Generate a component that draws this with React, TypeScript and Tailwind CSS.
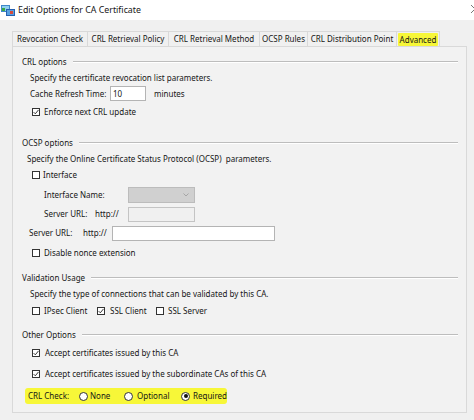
import React from "react";

const font = { fontFamily: '"Noto Sans", "Liberation Sans", sans-serif' };

const CheckBox = ({ checked }: { checked?: boolean }) => (
  <span className="inline-flex w-[8px] h-[8px] shrink-0 border border-[#333] bg-white">
    {checked && (
      <svg width="6" height="6" viewBox="0 0 6 6" className="block">
        <path d="M0.6 3.1 L2.3 4.8 L5.5 0.9" fill="none" stroke="#222" strokeWidth="0.9" />
      </svg>
    )}
  </span>
);

const Radio = ({ checked }: { checked?: boolean }) => (
  <span className="inline-flex items-center justify-center w-[9px] h-[9px] shrink-0 rounded-full border border-[#333] bg-white">
    {checked && <span className="w-[4px] h-[4px] rounded-full bg-[#111]" />}
  </span>
);

const Section = ({ title }: { title: string }) => (
  <div className="flex items-center h-[16px] pl-[9px] pr-[8px]">
    <span>{title}</span>
    <div className="flex-1 ml-[6px] border-t border-[#bdbdbd] border-b border-b-white" />
  </div>
);

const tabs = [
  { label: "Revocation Check", w: "w-[75px]" },
  { label: "CRL Retrieval Policy", w: "w-[81px]" },
  { label: "CRL Retrieval Method", w: "w-[91px]" },
  { label: "OCSP Rules", w: "w-[48px]" },
  { label: "CRL Distribution Point", w: "w-[89px]" },
];

export default function App() {
  return (
    <div className="w-[474px] h-[420px] overflow-hidden bg-[#f0f0f0] text-[#161616]" style={font}>
      {/* title bar */}
      <div className="h-[20px] bg-white flex items-center">
        <svg width="14" height="11" viewBox="0 0 14 11" className="ml-[1px]">
          <rect x="0" y="0" width="9" height="7" fill="#3f86c9" />
          <rect x="1" y="1" width="7" height="5" fill="#8fd0f0" />
          <rect x="1" y="3" width="3" height="3" fill="#3aa845" />
          <rect x="5" y="4" width="9" height="7" fill="#2560b0" />
          <rect x="6" y="5" width="7" height="5" fill="#5aa0e0" />
          <rect x="9" y="6" width="3" height="3" fill="#d84a3a" />
        </svg>
        <span className="ml-[3px] text-[8.8px] leading-none">Edit Options for CA Certificate</span>
        <div className="flex-1" />
        <svg width="10" height="10" viewBox="0 0 10 10" className="mr-[-6px] mt-[-2px]">
          <path d="M1 1 L9 9 M9 1 L1 9" stroke="#555" strokeWidth="0.8" />
        </svg>
      </div>

      <div className="pl-[12px] pr-[7px] pt-[11px]">
        {/* tabs */}
        <div className="flex h-[15px] text-[8px]">
          {tabs.map((t) => (
            <div
              key={t.label}
              className={`${t.w} flex items-center justify-center border-t border-l border-[#d9d9d9] bg-[#f0f0f0] whitespace-nowrap`}
            >
              {t.label}
            </div>
          ))}
          <div className="w-[44px] flex items-center justify-center border-t border-l border-r border-[#d9d9d9] pt-[1px]">
            <span className="bg-[#f7f738] px-[2px] h-[13px] flex items-center rounded-[1px]">Advanced</span>
          </div>
        </div>

        {/* panel */}
        <div className="h-[367px] border border-[#d9d9d9] bg-[#f2f2f2] pt-[7px] text-[8px]">
          <Section title="CRL options" />
          <div className="flex items-center h-[15px] pl-[17px]">
            Specify the certificate revocation list parameters.
          </div>
          <div className="flex items-center h-[17px] pl-[17px]">
            <span className="w-[80px]">Cache Refresh Time:</span>
            <span className="w-[36px] h-[15px] border border-[#b4b4b4] bg-white flex items-center pl-[2px]">10</span>
            <span className="ml-[8px]">minutes</span>
          </div>
          <div className="flex items-center h-[20px] pl-[19px]">
            <CheckBox checked />
            <span className="ml-[4px]">Enforce next CRL update</span>
          </div>
          <div className="h-[13px]" />

          <Section title="OCSP options" />
          <div className="flex items-center h-[15px] pl-[14px]">
            Specify the Online Certificate Status Protocol (OCSP)&nbsp; parameters.
          </div>
          <div className="flex items-center h-[17px] pl-[19px]">
            <CheckBox />
            <span className="ml-[3px]">Interface</span>
          </div>
          <div className="flex items-center h-[23px] pl-[31px]">
            <span className="w-[84px]">Interface Name:</span>
            <span className="w-[67px] h-[16px] border border-[#bcbcbc] bg-[#d0d0d0] flex items-center justify-end pr-[5px]">
              <svg width="6" height="4" viewBox="0 0 6 4">
                <path d="M0.5 0.5 L3 3 L5.5 0.5" fill="none" stroke="#9a9a9a" strokeWidth="0.8" />
              </svg>
            </span>
          </div>
          <div className="flex items-center h-[16px] pl-[31px]">
            <span className="w-[51px]">Server URL:</span>
            <span className="w-[33px]">http://</span>
            <span className="w-[67px] h-[15px] border border-[#c4c4c4] bg-[#f0f0f0]" />
          </div>
          <div className="flex items-center h-[22px] pl-[16px]">
            <span className="w-[54px]">Server URL:</span>
            <span className="w-[29px]">http://</span>
            <span className="w-[163px] h-[15px] border border-[#b4b4b4] bg-white" />
          </div>
          <div className="flex items-center h-[18px] pl-[19px]">
            <CheckBox />
            <span className="ml-[4px]">Disable nonce extension</span>
          </div>
          <div className="h-[8px]" />

          <Section title="Validation Usage" />
          <div className="flex items-center h-[16px] pl-[17px]">
            Specify the type of connections that can be validated by this CA.
          </div>
          <div className="flex items-center h-[18px] pl-[19px]">
            <div className="w-[65px] flex items-center">
              <CheckBox />
              <span className="ml-[4px]">IPsec Client</span>
            </div>
            <div className="w-[59px] flex items-center">
              <CheckBox checked />
              <span className="ml-[5px]">SSL Client</span>
            </div>
            <div className="flex items-center">
              <CheckBox />
              <span className="ml-[4px]">SSL Server</span>
            </div>
          </div>
          <div className="h-[7px]" />

          <Section title="Other Options" />
          <div className="flex items-center h-[20px] pl-[19px]">
            <CheckBox checked />
            <span className="ml-[5px]">Accept certificates issued by this CA</span>
          </div>
          <div className="flex items-center h-[21px] pl-[19px]">
            <CheckBox checked />
            <span className="ml-[5px]">Accept certificates issued by the subordinate CAs of this CA</span>
          </div>
          <div className="flex items-center h-[24px] pl-[12px]">
            <div className="flex items-center h-[16px] w-[202px] pl-[3px] bg-[#f7f738] rounded-[3px]">
              <span className="w-[51px]">CRL Check:</span>
              <div className="w-[45px] flex items-center">
                <Radio />
                <span className="ml-[2px]">None</span>
              </div>
              <div className="w-[57px] flex items-center">
                <Radio />
                <span className="ml-[4px]">Optional</span>
              </div>
              <div className="flex items-center">
                <Radio checked />
                <span className="ml-[3px]">Required</span>
              </div>
            </div>
          </div>
        </div>
      </div>
    </div>
  );
}
